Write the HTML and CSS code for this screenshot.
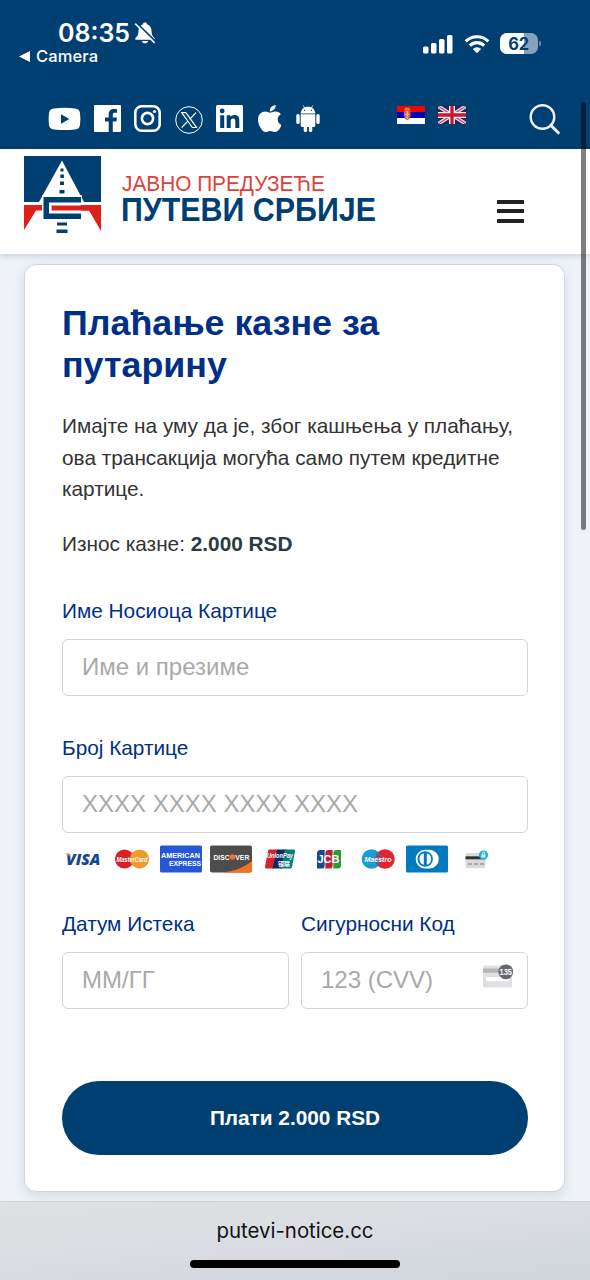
FILE: index.html
```html
<!DOCTYPE html>
<html lang="sr">
<head>
<meta charset="utf-8">
<title>putevi-notice.cc</title>
<link rel="stylesheet" href="styles.css">
</head>
<body>
<div class="screen">
  <div class="top">
    <div class="status">
      <div class="status-left">
        <div class="clock">
          <span class="time">08:35</span>
          <svg width="22" height="22" viewBox="0 0 22 22"><path d="M11 .6c-1.200 0-2 .7-2 1.600C6.200 3.200 4.500 5.500 4.500 8.500c0 4.500-1.300 5.800-3 7.600-.8.900-.4 1.700.6 1.700h17.800c1 0 1.400-.8.600-1.700-1.700-1.800-3-3.100-3-7.600 0-3-1.700-5.300-4.500-6.300 0-.9-.8-1.600-2-1.600zM7.800 18.900c.4 1.500 1.600 2.300 3.200 2.300s2.800-.8 3.200-2.300z" fill="#fff"/><path d="M2.400 .8 22 19.800" stroke="#003f72" stroke-width="1.800"/><path d="M1.200 1.600 20.600 20.900" stroke="#fff" stroke-width="1.500"/></svg>
        </div>
        <div class="back">
          <svg width="11" height="11" viewBox="0 0 11 11"><path d="M0 5.500 11 0v11z" fill="#fff"/></svg>
          <span>Camera</span>
        </div>
      </div>
      <div class="status-right">
        <svg width="30" height="20" viewBox="0 0 30 20" fill="#fff"><rect y="12.500" width="5.500" height="7" rx="1.500"/><rect x="8" y="9" width="5.500" height="10.500" rx="1.500"/><rect x="16" y="5" width="5.500" height="14.500" rx="1.500"/><rect x="24" y="1" width="5.500" height="18.500" rx="1.500"/></svg>
        <svg class="wifi" width="26" height="20" viewBox="0 0 26 20" fill="none" stroke="#fff" stroke-width="3.200"><path d="M1.700 7.400a16 16 0 0 1 22.600 0"/><path d="M5.800 11.600a10.200 10.200 0 0 1 14.400 0"/><path d="M13 19.300 8.900 15a5.800 5.800 0 0 1 8.200 0z" fill="#fff" stroke="none"/></svg>
        <svg width="42" height="21" viewBox="0 0 42 21"><rect width="38" height="21" rx="7" fill="#86a2ba"/><path d="M24 0H7a7 7 0 0 0-7 7v7a7 7 0 0 0 7 7h17z" fill="#fff"/><path d="M39.300 7.500c2.200.8 2.200 5.200 0 6z" fill="#86a2ba"/><text x="18.700" y="17" text-anchor="middle" class="battery-text" textLength="21" lengthAdjust="spacingAndGlyphs">62</text></svg>
      </div>
    </div>
    <div class="links">
      <div class="social">
        <svg width="33" height="24" viewBox="0 0 33 24"><path fill="#fff" fill-rule="evenodd" d="M6 1.500Q16.500.2 27 1.500q4.500.4 5 4.500.8 6 0 12-.5 4.100-5 4.500-10.500 1.100-21 0-4.500-.4-5-4.500-.8-6 0-12 .5-4.100 5-4.500zM13 7.300v9.400l8.300-4.700z"/></svg>
        <svg width="27" height="27" viewBox="0 0 27 27"><path fill="#fff" d="M1 0h25a1 1 0 0 1 1 1v25a1 1 0 0 1-1 1h-7.200V16.600h3.600l.6-4.200h-4.200V9.800c0-1.400.6-2 2.100-2H23V4.200c-.5-.1-1.600-.2-2.900-.2-3.300 0-5.400 1.900-5.400 5.300v3.100H11v4.200h3.700V27H1a1 1 0 0 1-1-1V1a1 1 0 0 1 1-1z"/></svg>
        <svg width="27" height="27" viewBox="0 0 27 27" fill="none" stroke="#fff" stroke-width="2.600"><rect x="1.300" y="1.300" width="24.400" height="24.400" rx="6.500"/><circle cx="13.500" cy="13.500" r="5.600"/><circle cx="20.500" cy="6.500" r="1.600" fill="#fff" stroke="none"/></svg>
        <svg class="x-icon" width="28" height="28" viewBox="0 0 28 28" fill="none" stroke="#fff" stroke-width="1"><circle cx="14" cy="14" r="13.300"/><path d="M6.700 6.700h4.200l10.600 14.800h-4.200zM21 6.700l-6.300 6.600M13 14.900l-6.300 6.600" stroke-width="1.200"/></svg>
        <svg width="27" height="27" viewBox="0 0 27 27"><rect width="27" height="27" rx="1.500" fill="#fff"/><g fill="#003f72"><circle cx="6.200" cy="6" r="2.400"/><path d="M4.200 10.200h4V23h-4zM10.700 10.200h3.800V12c.7-1.200 2-2.100 4-2.100 4 0 4.800 2.600 4.800 6V23h-4v-6.200c0-1.500 0-3.400-2.100-3.400s-2.500 1.600-2.500 3.300V23h-4z"/></g></svg>
        <svg class="apple" width="23" height="27" viewBox="4 32 367 448" preserveAspectRatio="none"><path fill="#fff" d="M318.700 268.700c-.2-36.700 16.400-64.400 50-84.800-18.800-26.900-47.200-41.700-84.700-44.600-35.500-2.800-74.300 20.700-88.500 20.700-15 0-49.400-19.700-76.400-19.700C63.300 141.200 4 184.800 4 273.500q0 39.300 14.400 81.200c12.800 36.700 59 126.700 107.200 125.200 25.200-.6 43-17.900 75.800-17.900 31.800 0 48.300 17.900 76.400 17.900 48.600-.7 90.400-82.500 102.600-119.300-65.200-30.700-61.700-90-61.700-91.900zm-56.600-164.200c27.300-32.400 24.800-61.900 24-72.500-24.100 1.400-52 16.400-67.900 34.900-17.500 19.800-27.800 44.300-25.600 71.900 26.100 2 49.900-11.400 69.500-34.300z"/></svg>
        <svg width="24" height="27" viewBox="0 0 24 27"><g fill="#fff"><path d="M4.700 8.400C4.900 4.300 8 1.700 12 1.700s7.100 2.600 7.300 6.700z"/><path d="M4.700 9.300h14.600v11.200a1.500 1.500 0 0 1-1.500 1.500H6.200a1.500 1.500 0 0 1-1.500-1.500z"/><rect x=".3" y="9.100" width="3.400" height="10" rx="1.700"/><rect x="20.300" y="9.100" width="3.400" height="10" rx="1.700"/><rect x="7.700" y="19" width="3.400" height="8" rx="1.600"/><rect x="12.900" y="19" width="3.400" height="8" rx="1.600"/></g><path d="M7.200.5l1.500 2.600M16.800.5l-1.500 2.600" stroke="#fff" stroke-width=".8"/><g fill="#003f72"><circle cx="8.700" cy="5.300" r=".7"/><circle cx="15.300" cy="5.300" r=".7"/></g></svg>
      </div>
      <div class="flags">
        <svg width="28" height="18" viewBox="0 0 28 18"><path fill="#fff" d="M0 0h28v18H0z"/><path fill="#f00" d="M0 0h28v6H0z"/><path fill="#0000b8" d="M0 6h28v6H0z"/><path d="M7 4.500h6.500v5.500q-.4 3-3.200 4.200Q7.400 13 7 10z" fill="#df5b50"/><path d="M8 1.800h4.500l.5 2.800H7.500z" fill="#c48a3c"/><path d="M10.200 5v8M8.200 8.300h4" stroke="#f2b8ab" stroke-width="1.200"/></svg>
        <svg width="28" height="18" viewBox="0 0 28 18"><path fill="#1a2768" d="M0 0h28v18H0z"/><path d="M0 0l28 18M28 0L0 18" stroke="#e7e3ea" stroke-width="3.600"/><path d="M0 0l28 18M28 0L0 18" stroke="#d8405a" stroke-width="1.200"/><path d="M14 0v18M0 9h28" stroke="#f4eef2" stroke-width="6"/><path d="M14 0v18M0 9h28" stroke="#d0142f" stroke-width="3.300"/></svg>
      </div>
      <svg class="search" width="32" height="32" viewBox="0 0 32 32" fill="none" stroke="#eef2f5"><circle cx="13.500" cy="13" r="11.800" stroke-width="2.400"/><path d="M21.800 21.300l7.500 7.500" stroke-width="3" stroke-linecap="round"/></svg>
    </div>
  </div>

  <div class="brandbar">
    <svg class="emblem" width="78" height="77" viewBox="0 0 78 77">
      <path fill="#003f72" d="M0 0h77v46H0z"/><path fill="#fff" d="M38 4.500 60 46h-2v3H18v-3h-3z"/>
      <g fill="#003f72"><path d="M36.500 12.500h3v3h-3zM36.300 18.500h3.600v3.500h-3.600zM36 25.500h4V29h-4zM35.500 34h5v3.500h-5z"/></g>
      <path fill="#db2118" d="M0 49h77v26L65 54.500H12L0 74z"/>
      <path fill="#fff" d="M18 39h40v3H18z" opacity=".9"/>
      <path fill="#fff" d="M18 46h39v16H18z"/><path fill="#db2118" d="M27.500 49.500H66v5H27.500z"/>
      <path fill="#003f72" d="M19.500 41H57v5.500H25v11h32V63H19.500zM33 66.500h10v3H33zM32.500 73.500h11v3.500h-11z"/>
    </svg>
    <div class="wordmark">
      <svg width="256" height="22" viewBox="0 0 256 22"><text class="mark-top" x="0" y="16" textLength="203" lengthAdjust="spacingAndGlyphs">ЈАВНО ПРЕДУЗЕЋЕ</text></svg>
      <svg width="256" height="36" viewBox="0 0 256 36"><text class="mark-main" x="-1" y="23.500" textLength="255" lengthAdjust="spacingAndGlyphs">ПУТЕВИ СРБИЈЕ</text></svg>
    </div>
    <div class="menu"><i></i><i></i><i></i></div>
  </div>

  <main class="content">
    <section class="card">
      <h1>Плаћање казне за путарину</h1>
      <p>Имајте на уму да је, због кашњења у плаћању, ова трансакција могућа само путем кредитне картице.</p>
      <p>Износ казне: <b>2.000 RSD</b></p>

      <div class="group first">
        <div class="label">Име Носиоца Картице</div>
        <div class="box">Име и презиме</div>
      </div>
      <div class="group second">
        <div class="label">Број Картице</div>
        <div class="box">XXXX XXXX XXXX XXXX</div>
      </div>

      <div class="brands">
        <svg width="43" height="28" viewBox="0 0 43 28"><text x="4" y="19.500" class="visa" textLength="34.500" lengthAdjust="spacingAndGlyphs">VISA</text><path d="M2.500 8.300h4.500l2.500 5.500C8 11 5.500 9.300 2.500 8.300z" fill="#eda52d"/></svg>
        <svg width="43" height="28" viewBox="0 0 43 28"><circle cx="13.500" cy="14" r="9.600" fill="#d8222a"/><circle cx="28.500" cy="14" r="9.600" fill="#f09a2e"/><text x="21" y="16.700" text-anchor="middle" class="tiny" textLength="31" lengthAdjust="spacingAndGlyphs">MasterCard</text></svg>
        <svg width="43" height="28" viewBox="0 0 43 28"><rect y=".5" width="42" height="27" rx="1.500" fill="#2557d6"/><g class="amex"><text x="1" y="12.500" textLength="39" lengthAdjust="spacingAndGlyphs">AMERICAN</text><text x="9" y="21" textLength="32" lengthAdjust="spacingAndGlyphs">EXPRESS</text></g></svg>
        <svg width="43" height="28" viewBox="0 0 43 28"><rect y=".5" width="42" height="27" rx="2" fill="#4d4d4d"/><path d="M42 16v9.500a2 2 0 0 1-2 2H13C25 26 34 22.500 42 16z" fill="#f4721e"/><circle cx="22.500" cy="12" r="2.800" fill="#f4721e"/><g class="discover"><text x="3.500" y="14.900" textLength="16" lengthAdjust="spacingAndGlyphs">DISC</text><text x="25.300" y="14.900" textLength="14" lengthAdjust="spacingAndGlyphs">VER</text></g></svg>
        <svg width="43" height="28" viewBox="0 0 43 28"><path d="M10 4.500h9l-4.500 19H7q-1.500 0-1-2L9 6q.3-1.500 1-1.500z" fill="#d4232f"/><path d="M18 4.500h9.500l-4.500 19h-9.500z" fill="#10285f"/><path d="M26 4.500h9q1.500 0 1 2L33 22q-.3 1.500-2 1.500h-9.500z" fill="#0b7a7c"/><text x="8" y="13" class="tiny" textLength="26" lengthAdjust="spacingAndGlyphs">UnionPay</text><text x="19" y="20.700" class="cjk" textLength="12" lengthAdjust="spacingAndGlyphs">银联</text></svg>
        <svg width="43" height="28" viewBox="0 0 43 28"><path d="M12 5h5v15q0 3.500-3 3.500H9V8.500Q9 5 12 5z" fill="#154b96"/><path d="M20.500 5H25v15q0 3.500-3 3.500h-5V8.500Q17 5 20.500 5z" fill="#c11e38"/><path d="M28.500 5H33v15q0 3.500-3 3.500h-5V8.500Q25 5 28.500 5z" fill="#2b9b35"/><path d="M17 5v18.500M25 5v18.500" stroke="#fff" stroke-width=".7"/><text x="9.500" y="17.500" class="jcb" textLength="22" lengthAdjust="spacingAndGlyphs">JCB</text></svg>
        <svg width="43" height="28" viewBox="0 0 43 28"><circle cx="14.500" cy="14" r="9.800" fill="#1b9dd3"/><circle cx="28" cy="14" r="9.800" fill="#de2630"/><path d="M21.200 7a9.800 9.800 0 0 1 0 14 9.800 9.800 0 0 1 0-14z" fill="#6a5a8c"/><text x="21" y="16.700" text-anchor="middle" class="tiny" textLength="27" lengthAdjust="spacingAndGlyphs">Maestro</text></svg>
        <svg width="43" height="28" viewBox="0 0 43 28"><rect y=".5" width="42" height="27" rx="1.500" fill="#0079be"/><path d="M19 4.800h4.500a9.300 9.300 0 0 1 0 18.600H19a9.300 9.300 0 0 1 0-18.600z" fill="#fff"/><circle cx="19.200" cy="14" r="7.700" fill="#0079be"/><path d="M17.800 8.300v11.400a5.900 5.900 0 0 1 0-11.400zM20.800 8.300a5.900 5.900 0 0 1 0 11.400z" fill="#fff"/></svg>
        <svg width="43" height="28" viewBox="0 0 43 28"><rect x="9.500" y="8" width="20" height="15" rx="2" fill="#d9d9d9"/><path d="M9.500 11.300h20v3h-20z" fill="#333"/><path d="M12 19h4M18 19h4M24 19h4" stroke="#777"/><circle cx="27.500" cy="10" r="4.600" fill="#16b1e8"/><path d="M25.500 9.500h4v3h-4z" fill="#fff"/><path d="M26.300 9.500V8.300a1.200 1.200 0 0 1 2.400 0v1.200" stroke="#fff" fill="none" stroke-width=".8"/></svg>
      </div>

      <div class="pair">
        <div>
          <div class="label">Датум Истека</div>
          <div class="box">ММ/ГГ</div>
        </div>
        <div>
          <div class="label">Сигурносни Код</div>
          <div class="box cvv"><span>123 (CVV)</span>
            <svg width="31" height="25" viewBox="0 0 31 25"><rect y="1.500" width="29" height="22" rx="1.500" fill="#e1e1e4"/><path d="M0 4.500h20v4.300H0z" fill="#b5b5b9"/><rect x="3" y="13" width="23" height="4.200" rx="1" fill="#fff"/><circle cx="22.800" cy="7.800" r="7.400" fill="#666871"/><text x="22.800" y="11.400" text-anchor="middle" class="cvv-text" textLength="12.500" lengthAdjust="spacingAndGlyphs">135</text></svg>
          </div>
        </div>
      </div>
      <div class="pay">Плати 2.000 RSD</div>
    </section>
  </main>

  <div class="urlbar">
    <span>putevi-notice.cc</span>
    <i class="home"></i>
  </div>
  <i class="scroll"></i>
</div>
</body>
</html>
```

FILE: styles.css
```css
* { box-sizing: border-box; }
body { margin: 0; font-family: "Liberation Sans", Arial, sans-serif; color: #333; }
svg { display: block; flex: none; }
.screen { position: relative; width: 590px; height: 1280px; overflow: hidden; display: flex; flex-direction: column; background: #eff3f8; }

.top { height: 149px; flex: none; background: #003f72; color: #fff; }
.status { height: 104px; padding: 18px 48px 0 19px; display: flex; justify-content: space-between; font-family: Inter, sans-serif; }
.clock { display: flex; align-items: center; gap: 4px; height: 29px; padding-left: 39px; }
.time { font-size: 25px; font-weight: 600; letter-spacing: 0; }
.back { display: flex; align-items: center; gap: 6px; height: 18px; font-size: 16.500px; font-weight: 500; letter-spacing: .1px; }
.status-right { display: flex; gap: 11px; padding-top: 15px; height: 36px; align-items: center; }
.wifi { margin-right: -1px; }
.battery-text { font: 700 17px Inter, sans-serif; fill: #003f72; }

.links { display: flex; height: 32px; }
.social { display: flex; align-items: center; height: 29px; padding-left: 48px; gap: 13.500px; width: 397px; }
.social svg:first-child { margin-right: -1px; }
.x-icon { margin-top: 2px; }
.apple { margin-right: 2px; margin-left: 1px; }
.flags { display: flex; gap: 13px; padding-top: 2px; width: 132px; }

.brandbar { position: relative; height: 105px; flex: none; display: flex; background: #fff; padding: 7px 66px 0 24px; box-shadow: 0 2px 6px rgba(0, 50, 90, .18); }
.wordmark { margin: 19px 0 0 20px; }
.wordmark svg { overflow: visible; }
.mark-top { font-size: 21.500px; fill: #e0403a; }
.mark-main { font-size: 33px; font-weight: 700; fill: #003f72; }
.menu { display: flex; flex-direction: column; gap: 5.500px; margin: 43.500px 0 0 auto; }
.menu i { width: 27px; height: 4px; background: #222; border-radius: .5px; }

.content { flex: 1; min-height: 0; padding: 10px 25px 0 24px; }
.card { height: 928px; padding: 37px 36px 0 37px; border: 1.500px solid #cdd7e0; border-radius: 12px; background: #fff; box-shadow: 0 4px 12px rgba(0, 40, 70, .12); }
h1 { margin: 0; font-size: 35.800px; line-height: 42px; color: #002f87; }
p { margin: 24px 0 0; font-size: 20.800px; line-height: 31.500px; }
p + p { margin-top: 23.500px; }
p b { color: #2d3a40; }
.label { font-size: 20.800px; line-height: 24px; color: #002f87; }
.box { display: flex; align-items: center; height: 57px; margin-top: 16px; padding: 0 13px 1px 19px; border: 1.500px solid #d5d5d5; border-radius: 6px; font-size: 24px; color: #a9a9a9; background: #fff; }
.group.first { margin-top: 39.500px; }
.group.second { margin-top: 39.500px; }
.brands { display: flex; gap: 6.200px; margin-top: 12px; }
.pair { display: grid; grid-template-columns: 1fr 1fr; gap: 12px; margin-top: 39px; }
.cvv { justify-content: space-between; }
.cvv svg { margin-top: -6px; }
.pay { display: flex; align-items: center; justify-content: center; height: 74px; margin-top: 72px; border-radius: 37px; background: #003f72; color: #fff; font-size: 20.800px; font-weight: 700; }

.visa { font: italic 800 15px "Open Sans", sans-serif; fill: #15458f; }
.tiny { font: italic 700 7px "Liberation Sans", sans-serif; fill: #fff; }
.amex { font: 700 7.500px "Liberation Sans", sans-serif; fill: #fff; }
.discover { font: 700 7.500px "Liberation Sans", sans-serif; fill: #fff; }
.cjk { font: 700 6px "Noto Sans CJK SC", sans-serif; fill: #fff; }
.jcb { font: 700 10px "Liberation Sans", sans-serif; fill: #fff; }
.cvv-text { font: 700 9px "Liberation Sans", sans-serif; fill: #fff; }

.urlbar { position: relative; height: 79px; flex: none; display: flex; flex-direction: column; align-items: center; justify-content: space-between; padding: 16px 0 12px; border-top: 1.500px solid #ced3d6; background: linear-gradient(175deg, #dfe2e4, #d9dde1 50%, #d0d5d9); color: #111; font: 20.400px/26px Inter, sans-serif; }
.home { width: 210px; height: 8px; border-radius: 4px; background: #000; }
.scroll { position: absolute; left: 581px; top: 102px; width: 5px; height: 428px; border-radius: 3px; background: rgba(0, 0, 0, .5); }
```
